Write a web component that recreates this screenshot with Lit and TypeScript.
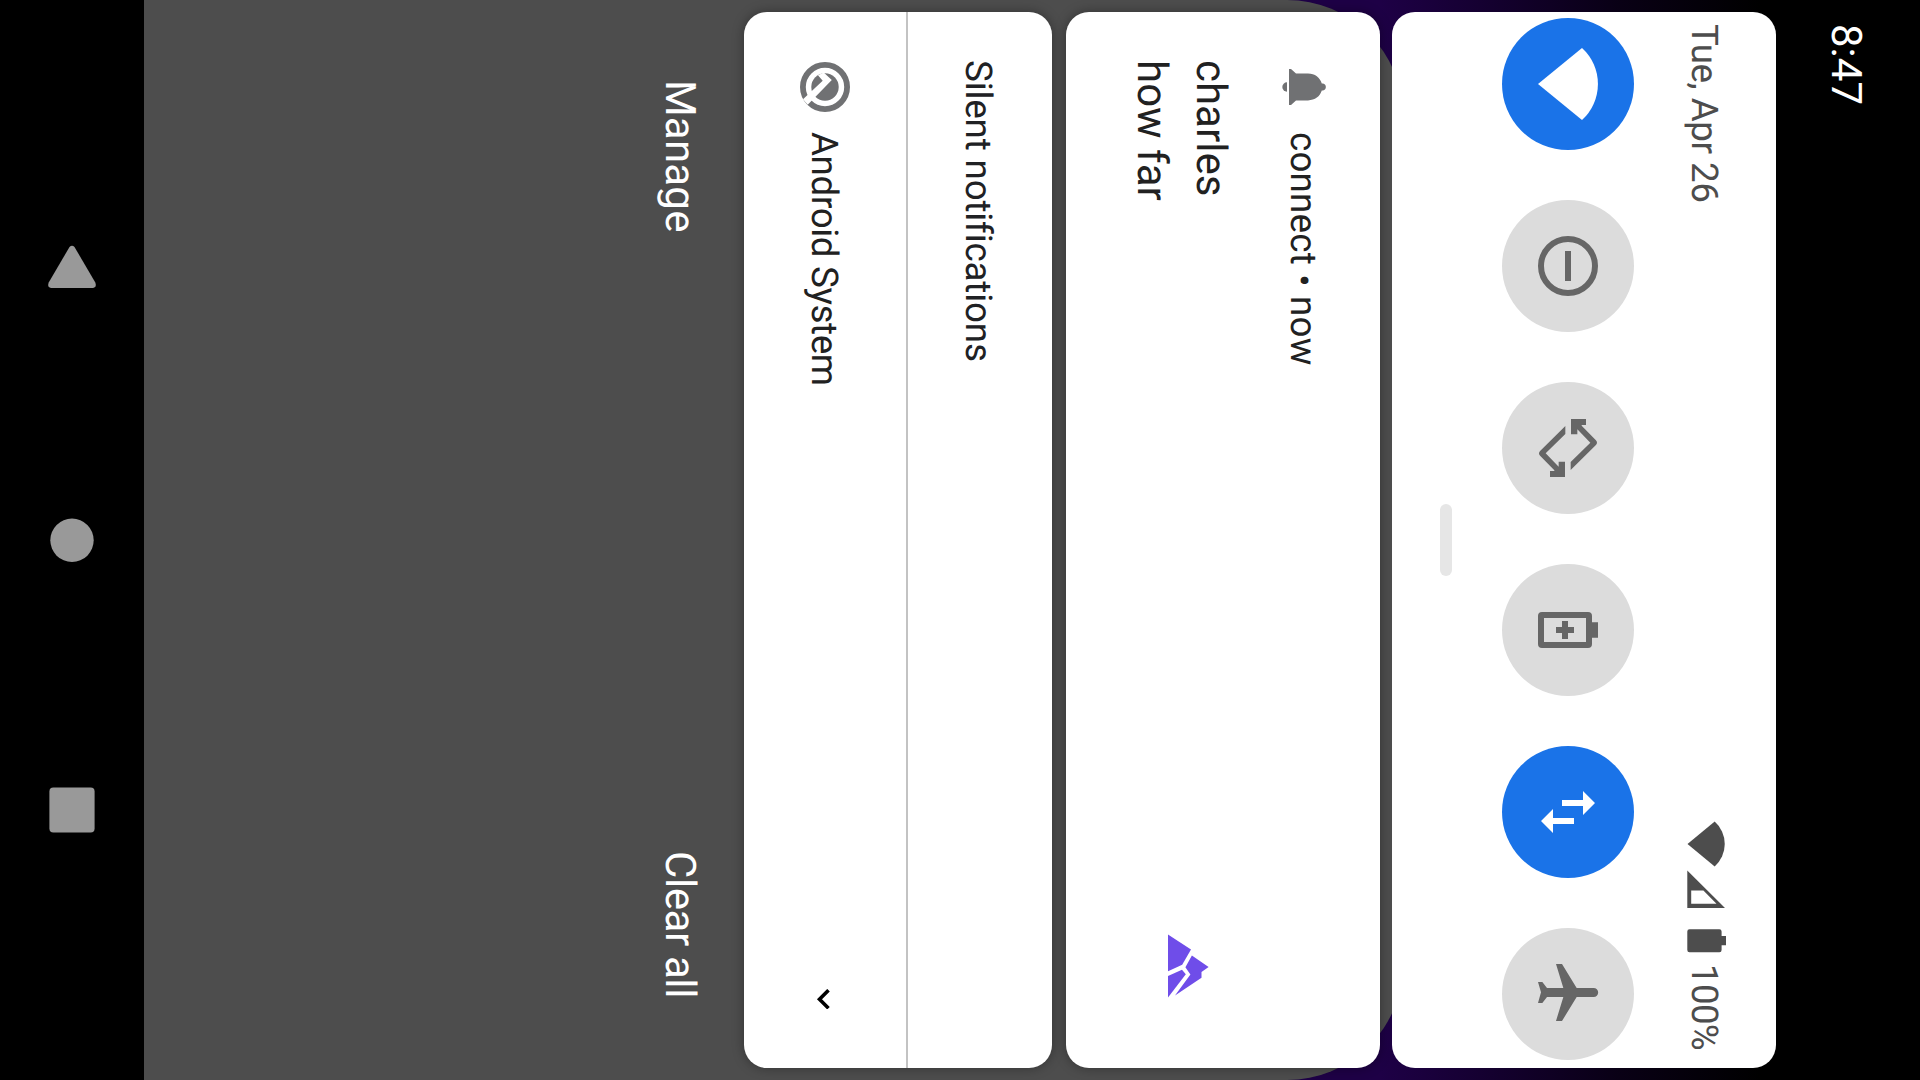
import { LitElement, html, css, svg, SVGTemplateResult } from "lit";
import { customElement, property } from "lit/decorators.js";

// Tile glyphs are drawn around a centre origin, three units to the pixel.
const glyphs: Record<string, SVGTemplateResult> = {
  wifi: svg`<path d="M-90 0 42-108A146 146 0 0 1 42 108z"/>`,
  dnd: svg`<circle r="81" fill="none" stroke="currentColor" stroke-width="18"/><path d="M-9-45H9V45H-9z"/>`,
  rotate: svg`<path d="M-8-66-83 8Q-91 16-83 24L-41 67V69H-54V87H-9V41H-28V56L-67 16-8-42z"/><path d="M8 66 83-8Q91-16 83-24L41-67V-69H54V-87H9V-41H28V-56L67-16 8 42z"/>`,
  saver: svg`<path fill-rule="evenodd" d="M-78-54H60A12 12 0 0 1 72-42V-23H90V23H72V42A12 12 0 0 1 60 54H-78A12 12 0 0 1-90 42V-42A12 12 0 0 1-78-54zM-72-36V36H54V-36z"/><path d="M-18-27H0V-9H18V9H0V27H-18V9H-36V-9H-18z"/>`,
  data: svg`<path d="M-18-36H45V-63L81-27 45 9V-18H-18z"/><path d="M18 36H-45V63L-81 27-45-9V18H18z"/>`,
  airplane: svg`<path d="M77-18a13.5 13.5 0 0 1 0 27H26L-18 81h-18L-14 9H-63L-77 27H-90L-81-5-90-36h13L-63-18H-14L-36-90h18L26-18z"/>`,
};

@customElement("quick-tile")
export class QuickTile extends LitElement {
  @property() icon = "wifi";
  @property({ type: Boolean, reflect: true }) active = false;

  static styles = css`
    :host {
      display: flex;
      align-items: center;
      justify-content: center;
      width: 132px;
      height: 132px;
      border-radius: 50%;
      background: #dcdcdc;
      color: #666;
    }
    :host([active]) {
      background: #1a73e8;
      color: #fff;
    }
    .glyph {
      display: block;
      width: 72px;
      height: 72px;
      fill: currentColor;
    }
  `;

  render() {
    return html`<svg class="glyph" viewBox="-108 -108 216 216">${glyphs[this.icon]}</svg>`;
  }
}

@customElement("app-root")
export class AppRoot extends LitElement {
  private tiles = [
    { icon: "wifi", active: true },
    { icon: "dnd", active: false },
    { icon: "rotate", active: false },
    { icon: "saver", active: false },
    { icon: "data", active: true },
    { icon: "airplane", active: false },
  ];

  // Blocks stack right to left and lines run top to bottom.
  static styles = css`
    :host {
      display: block;
      width: 1920px;
      height: 1080px;
      overflow: hidden;
    }
    * {
      box-sizing: border-box;
    }
    svg {
      display: block;
      flex: none;
    }
    .screen {
      position: relative;
      display: flex;
      flex-direction: column;
      width: 1920px;
      height: 1080px;
      writing-mode: vertical-rl;
      text-orientation: sideways;
      text-rendering: geometricPrecision;
      font-kerning: normal;
      white-space: nowrap;
      font-family: Roboto, "Liberation Sans", sans-serif;
      font-size: 36.75px;
      line-height: 48px;
      color: #212121;
      background: linear-gradient(to right, #1e0046 1380px, #14002f 1490px, #090015 1620px, #000 1760px);
    }
    .scrim {
      position: absolute;
      left: 0;
      top: 0;
      width: 1403px;
      height: 1080px;
      border-radius: 0 116px 116px 0;
      background: #4d4d4d;
    }
    .status {
      width: 144px;
      padding: 24px 51px 0 0;
      font-size: 42px;
      color: #fff;
      background: #000;
    }
    .shade {
      position: relative;
      flex: 1;
      display: flex;
      flex-direction: column;
      padding: 12px 0;
    }
    .panel,
    .card {
      flex: none;
      background: #fff;
      border-radius: 23px;
      box-shadow: 0 0 12px rgba(0, 0, 0, 0.35);
    }
    .panel {
      width: 384px;
      padding-right: 48px;
      box-shadow: none;
    }
    .head {
      display: flex;
      align-items: center;
      justify-content: space-between;
      width: 48px;
      padding: 11.5px 0 17.5px;
      color: #4d4d4d;
    }
    .date {
      letter-spacing: -0.5px;
    }
    .percent {
      letter-spacing: -0.7px;
    }
    .indicators {
      display: flex;
      align-items: center;
    }
    .indicators svg {
      fill: currentColor;
    }
    .tiles {
      display: flex;
      justify-content: space-between;
      width: 132px;
      margin-right: 46px;
      padding: 6px 0 8px;
    }
    .handle {
      width: 12px;
      height: 72px;
      margin: 492px 50px 0 0;
      border-radius: 6px;
      background: #e6e6e6;
    }
    .message {
      width: 314px;
      margin-right: 12px;
      padding: 48px 53px 70px 0;
    }
    .app {
      display: flex;
      align-items: center;
      width: 48px;
      gap: 22px;
      letter-spacing: 0.19px;
    }
    .body {
      display: flex;
      justify-content: space-between;
      align-items: flex-start;
      margin-right: 39px;
      font-size: 42px;
      line-height: 59px;
    }
    .logo {
      margin-right: 31px;
    }
    .silent {
      display: flex;
      flex-direction: column;
      width: 308px;
      margin-right: 14px;
    }
    .title {
      display: flex;
      flex-direction: column;
      width: 146px;
      padding: 48px 50px 0 0;
      border-left: 2px solid #c3c3c3;
      color: #202124;
      letter-spacing: -0.16px;
      font-variant-ligatures: normal;
    }
    .row {
      display: flex;
      align-items: center;
      width: 162px;
      padding: 50px 0 59px;
      gap: 20px;
    }
    .row .name {
      flex: 1;
      margin-right: 2px;
      letter-spacing: -0.36px;
    }
    .actions {
      display: flex;
      justify-content: space-between;
      width: 60px;
      margin-right: 35px;
      padding: 68px 0 70px;
      font-size: 42px;
      line-height: 60px;
      color: #fff;
    }
    .manage {
      letter-spacing: 0.2px;
    }
    .clear {
      letter-spacing: -0.4px;
    }
    .nav {
      position: relative;
      width: 144px;
      background: #000;
    }
    .keys {
      display: flex;
      align-items: center;
      justify-content: space-between;
      width: 144px;
      height: 1080px;
      padding: 243px 0 246px;
      fill: #999;
    }
  `;

  render() {
    return html`
      <div class="screen">
        <div class="scrim"></div>
        <div class="status">8:47</div>
        <div class="shade">
          <div class="panel">
            <div class="head">
              <span class="date">Tue, Apr 26</span>
              <div class="indicators">
                <svg width="48" height="48" viewBox="0 0 48 48"><path d="M7.5 24 34.7 1.6A30 30 0 0 1 34.7 46.4z"/></svg>
                <svg width="48" height="48" viewBox="0 0 48 48"><path fill-rule="evenodd" d="M7.3 2.4 45 40H7.3zM11.2 22.6V35.7H36.5L23.4 22.6z"/></svg>
                <svg width="48" height="48" viewBox="0 0 48 48"><path d="M9.5 13.3H39.4a2.2 2.2 0 0 1 2.2 2.2V20H46v9.3H41.6V34a2.2 2.2 0 0 1-2.2 2.2H9.5A2.2 2.2 0 0 1 7.3 34V15.5a2.2 2.2 0 0 1 2.2-2.2z"/></svg>
                <span class="percent">100%</span>
              </div>
            </div>
            <div class="tiles">
              ${this.tiles.map((t) => html`<quick-tile icon=${t.icon} ?active=${t.active}></quick-tile>`)}
            </div>
            <div class="handle"></div>
          </div>

          <div class="card message">
            <div class="app">
              <svg width="50" height="50" viewBox="0 -1 50 50" fill="#707173">
                <path d="M11 8.1H13L18 12.4H30C37 12.4 42 16.4 43.8 22.4H45A3.7 3.7 0 0 1 45 29.6H43.8C42 35.4 37 39.4 30 39.4H18L13 44.1H11z"/>
                <path d="M9 21.3V30.7A4.7 4.7 0 0 1 9 21.3z"/>
              </svg>
              <span>connect • now</span>
            </div>
            <div class="body">
              <div class="text">charles<br />how far</div>
              <svg class="logo" width="41" height="64" viewBox="0 0 41 64" fill="#6f4de9">
                <path d="M0 .5 23 15.4 14.2 30.8 0 37.3z"/>
                <path d="M23.9 21.4 40.6 33 33.5 38V43.8L7 61.6 22.4 40.5 17.4 33.2z"/>
                <path d="M0 42 14 35.8 17.8 40.3 0 63.4z"/>
              </svg>
            </div>
          </div>

          <div class="card silent">
            <div class="title"><span>Silent notifications</span></div>
            <div class="row">
              <svg width="50" height="50" viewBox="-25 -25 50 50">
                <circle r="22.1" fill="none" stroke="#707173" stroke-width="5.8"/>
                <circle r="13.7" fill="#707173"/>
                <path fill="#fff" d="M-22 12.3-2.3-6.3-7-11.7-1.3-14.5 6.8-7-17.3 17.8z"/>
              </svg>
              <span class="name">Android System</span>
              <svg width="21" height="20" viewBox="0 0 21 20"><path d="M13.5 1.2 4.5 10.2 13.5 19.2" fill="none" stroke="#000" stroke-width="3.6"/></svg>
            </div>
          </div>

          <div class="actions"><span class="manage">Manage</span><span class="clear">Clear all</span></div>
        </div>
        <div class="nav">
          <div class="keys">
            <svg width="48" height="48" viewBox="0 0 48 48"><path d="M21.5 4Q24 1.6 26.5 4L47.3 39.5Q49 44.5 45 45H3Q-1 44.5 .7 39.5z"/></svg>
            <svg width="48" height="48" viewBox="0 0 48 48"><circle cx="24" cy="25.3" r="21.7"/></svg>
            <svg width="48" height="48" viewBox="0 0 48 48"><rect x="1.4" y="1.4" width="45.2" height="45.2" rx="4"/></svg>
          </div>
        </div>
      </div>
    `;
  }
}
